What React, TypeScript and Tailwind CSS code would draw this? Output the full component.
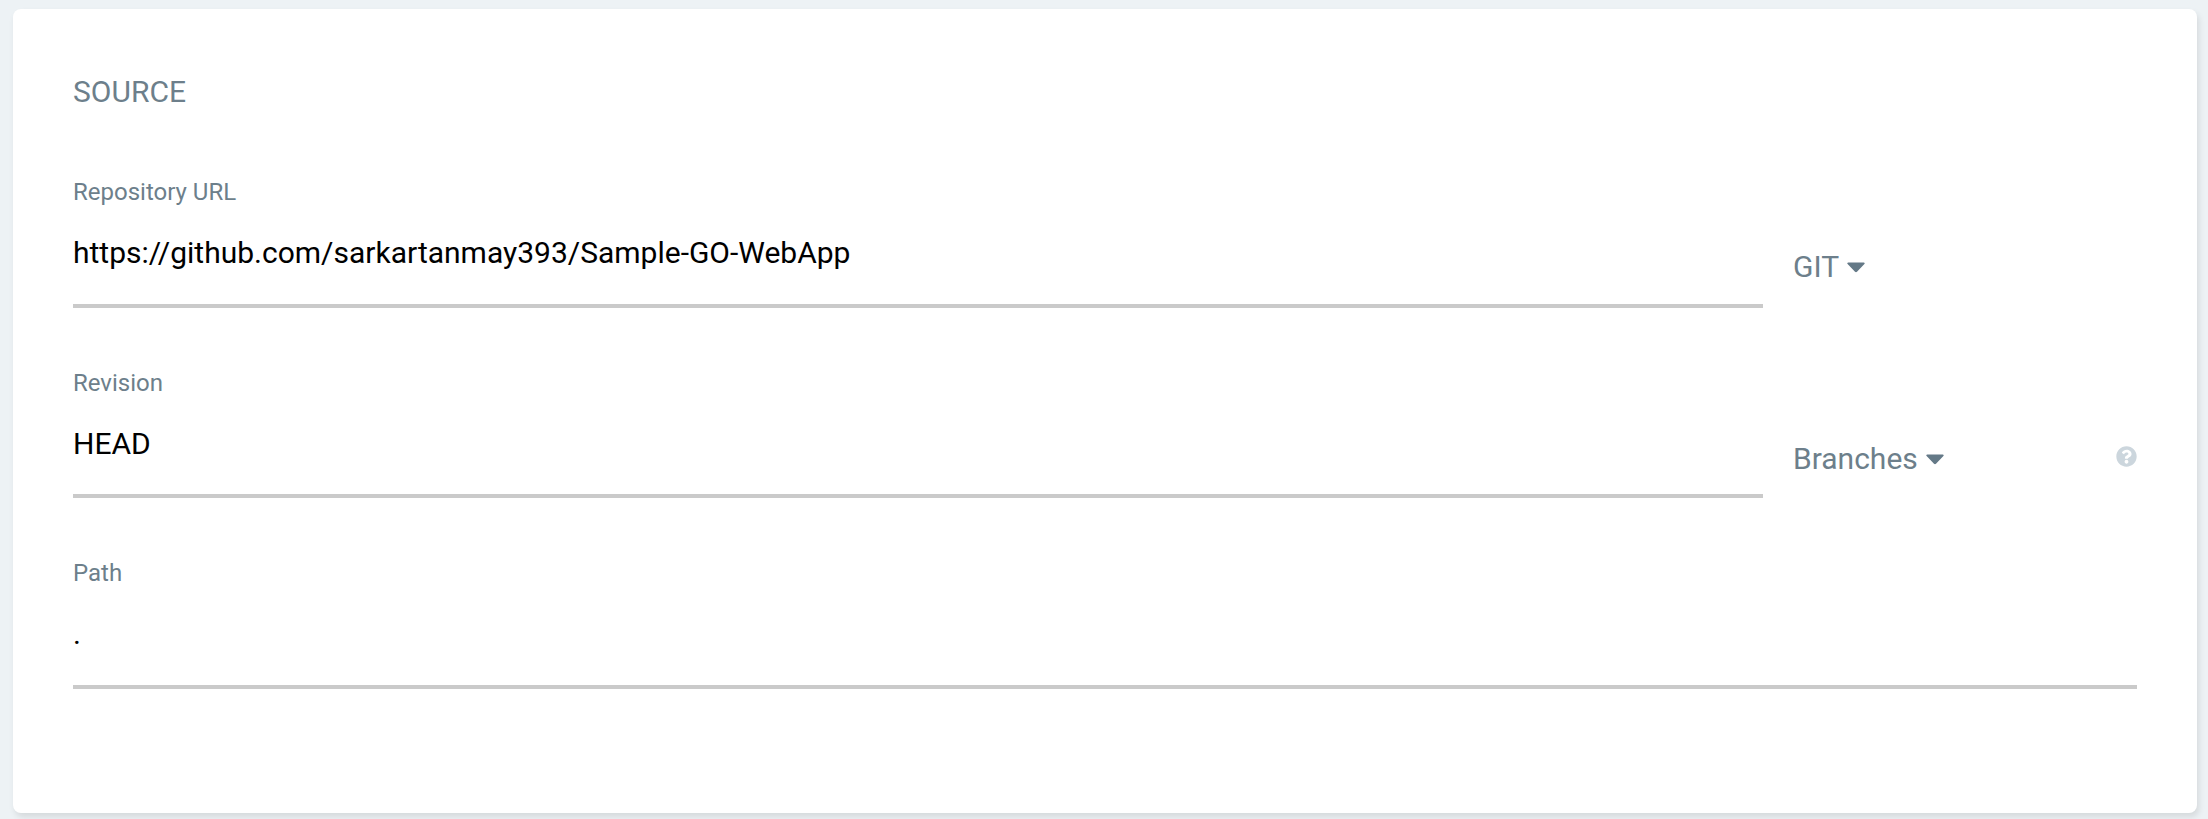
import type { ReactNode } from "react";
import { FaQuestionCircle } from "react-icons/fa";

function Field({ label, value, className = "" }: { label: string; value: string; className?: string }) {
  return (
    <div className={`flex flex-col border-b-4 border-[#cacaca] ${className}`}>
      <label className="h-7 text-2xl leading-7 text-[#6d7f8b]">{label}</label>
      <div className="mt-[29px] h-9 text-[30px] leading-9 text-black">{value}</div>
    </div>
  );
}

function Select({ children }: { children: ReactNode }) {
  return (
    <div className="flex h-9 items-center text-[30px] leading-9 text-[#6d7f8b]">
      <span>{children}</span>
      <svg className="ml-2 h-[11px] w-[18px] fill-[#647987]" viewBox="0 0 18 11">
        <path d="M1.3 0.5H16.7C17.7 0.5 18 1.5 17.4 2.1L10 9.8C9.4 10.4 8.6 10.4 8 9.8L0.6 2.1C0 1.5 0.3 0.5 1.3 0.5Z" />
      </svg>
    </div>
  );
}

export default function App() {
  return (
    <div className="h-[819px] w-[2208px] overflow-hidden bg-[#edf2f5] pt-[9px] pl-[13px] font-['Roboto',sans-serif]">
      <section className="flex h-[804px] w-[2184px] flex-col rounded-lg bg-white px-[60px] pt-[65px] shadow-[2px_4px_6px_rgba(0,0,0,0.1)]">
        <h2 className="h-9 text-[30px] leading-9 text-[#6d7f8b]">SOURCE</h2>
        <div className="mt-[68px] flex h-[130px]">
          <Field className="w-[1690px]" label="Repository URL" value="https://github.com/sarkartanmay393/Sample-GO-WebApp" />
          <div className="ml-[30px] pt-[71px]">
            <Select>GIT</Select>
          </div>
        </div>
        <div className="mt-[61px] flex h-[129px]">
          <Field className="w-[1690px]" label="Revision" value="HEAD" />
          <div className="ml-[30px] flex flex-1 items-start justify-between pt-[72px]">
            <Select>Branches</Select>
            <FaQuestionCircle className="mt-[5px] size-[21px] text-[#ccd6dd]" />
          </div>
        </div>
        <Field className="mt-[61px] h-[130px]" label="Path" value="." />
      </section>
    </div>
  );
}
